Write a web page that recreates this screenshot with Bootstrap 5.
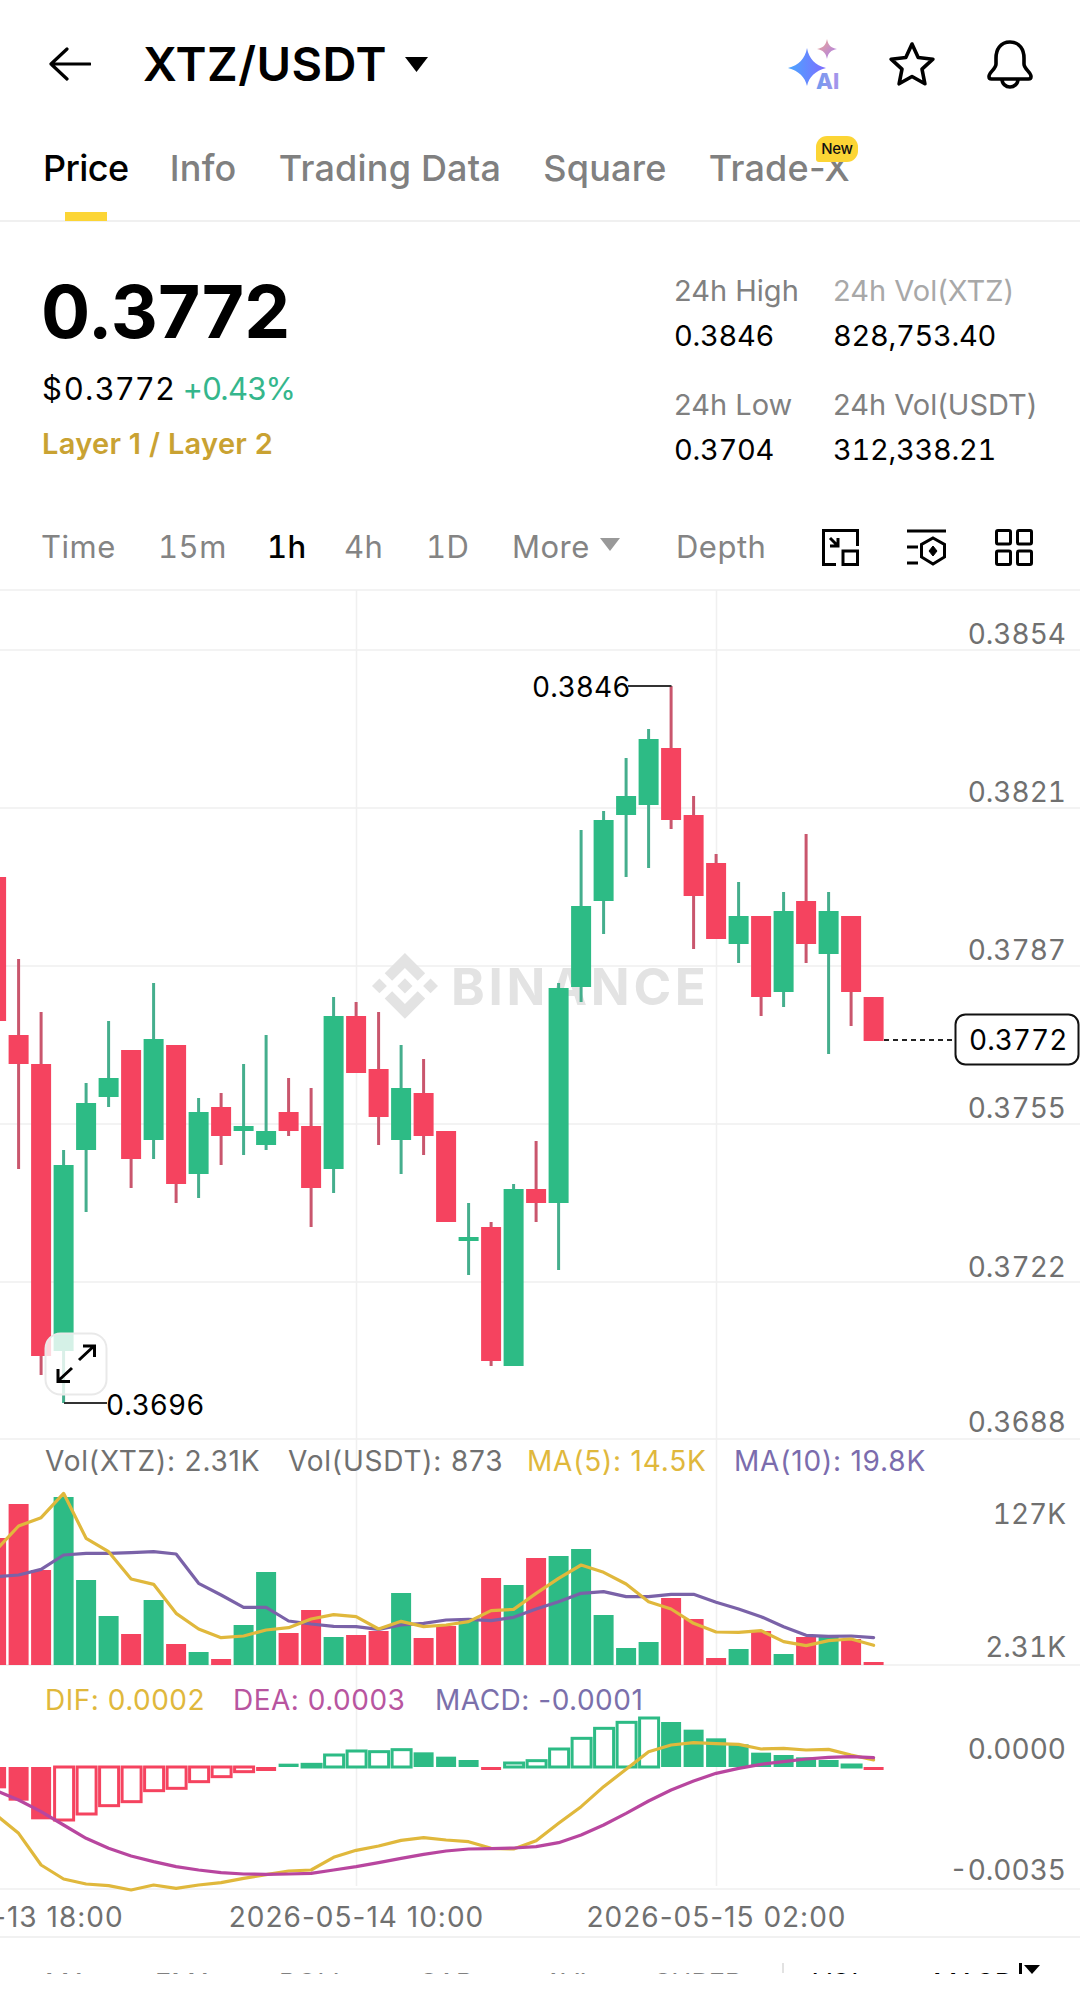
<!DOCTYPE html>
<html lang="en">
<head>
  <meta charset="UTF-8">
  <title>XTZ/USDT | Price</title>
  <link rel="stylesheet" href="https://cdn.jsdelivr.net/npm/bootstrap@5.3.0/dist/css/bootstrap.min.css">
  <style>
    body { font-family: Inter, "Liberation Sans", sans-serif; background: #fff; color: #000; width: 1080px; height: 1994px; overflow: hidden; }

    .top-bar { height: 128px; padding: 0 47px 0 49px; }
    .pair-name { font-size: 47px; font-weight: 600; line-height: 56px; margin-left: 52px; letter-spacing: .5px; }
    .pair-caret { width: 25px; height: 16px; margin-left: 17px; }
    .icon-ai { margin-right: 43px; }
    .icon-star { margin-right: 51px; }

    .tab-row { height: 94px; padding: 0 0 0 43px; gap: 42.3px; border-bottom: 2px solid #f0f0f0; }
    .tab-item { position: relative; font-size: 36px; line-height: 50px; color: #808080; margin-top: 15px; font-weight: 500; letter-spacing: .2px; }
    .tab-item.is-active { color: #000; letter-spacing: -.6px; margin-right: -1px; }
    .tab-item.is-active::after { content: ""; position: absolute; left: 22px; top: 69px; width: 42px; height: 9px; background: #fcd535; }
    .new-tag { position: absolute; right: -8px; top: -7px; width: 42px; height: 26px; border-radius: 11px 11px 11px 3px; background: #fcd535; color: #111; font-size: 15px; line-height: 26px; text-align: center; font-weight: 500; letter-spacing: -.4px; }

    .stats-row { height: 283px; padding: 50px 0 0 42px; }
    .last-price { font-size: 73px; font-weight: 700; line-height: 80px; margin-left: -1px; }
    .fiat-line { font-size: 31px; line-height: 40px; margin-top: 17px; letter-spacing: 2px; }
    .change-up { color: #35b68c; margin-left: 6px; letter-spacing: -.9px; }
    .tag-line { font-size: 29px; font-weight: 600; line-height: 40px; margin-top: 15px; color: #c9a232; letter-spacing: .3px; }
    .stat-col { width: 159px; margin-top: -1px; }
    .stat-col + .stat-col { width: 247px; }
    .stat-label { font-size: 29px; line-height: 40px; color: #808080; }
    .stat-label.is-light { color: #a8a8a8; }
    .stat-value { font-size: 29px; line-height: 40px; margin-top: 5px; margin-bottom: 29px; letter-spacing: -.3px; font-variant-numeric: tabular-nums; }

    .interval-row { height: 84px; padding: 0 47px 0 41px; font-size: 31px; color: #848484; letter-spacing: .5px; font-variant-numeric: tabular-nums; }
    .interval-row span { line-height: 40px; }
    .interval-row .is-active { color: #000; font-weight: 500; }
    .w-time { width: 117px; }
    .w-15m { width: 109px; }
    .w-1h { width: 77px; }
    .w-4h { width: 82px; }
    .w-1d { width: 86px; }
    .w-more { width: 88px; }
    .more-caret { width: 20px; height: 13px; margin-right: 56px; margin-top: -6px; }
    .gap-icon-2 { margin-left: 48px; }
    .gap-icon-3 { margin-left: 48px; }

    .chart-box { display: block; width: 1080px; height: 1347px; }
    .chart-box text { font-family: Inter, "Liberation Sans", sans-serif; font-size: 28px; letter-spacing: .8px; }
    .chart-box .tnum { font-variant-numeric: tabular-nums; letter-spacing: 0; }
    .chart-box .date-axis text { letter-spacing: 1px; }
    .chart-box .macd-legend text { letter-spacing: .5px; }
    .chart-box .mark-text { font-size: 51px; font-weight: 700; letter-spacing: 3.7px; }

    .indicator-row { height: 38px; overflow: hidden; padding: 26px 0 0 45px; border-top: 2px solid #f1f1f1; font-size: 27px; line-height: 40px; color: #808080; grid-template-columns: 110px 124px 141px 124px 110px 128px 31px 120px 86px auto; }
    .indicator-row .is-on { color: #000; }
    .indicator-split { width: 2px; height: 10px; background: #e2e2e2; margin-top: -1px; }
    .indicator-more { width: 16px; height: 9px; margin: 1px 0 0 2px; }
    .indicator-bar { width: 3px; height: 11px; background: #000; margin-top: -1px; }
  </style>
</head>
<body>

  <div class="d-flex align-items-center top-bar">
    <svg width="42" height="34" viewBox="0 0 42 34" fill="none" stroke="#000" stroke-width="3.2" stroke-linecap="round" stroke-linejoin="round"><path d="M41 17H2M18 2 2 17l16 15"/></svg>
    <span class="pair-name">XTZ/USDT</span>
    <svg class="pair-caret" viewBox="0 0 25 16"><path d="M1 1h23L12.500 16z" fill="#000"/></svg>
    <div class="ms-auto d-flex align-items-center">
      <svg class="icon-ai" width="60" height="56" viewBox="785 35 60 56">
        <defs>
          <linearGradient id="aiBig" x1="0" y1="0" x2="1" y2="0"><stop offset="0" stop-color="#4aa6ff"/><stop offset="1" stop-color="#7f6cff"/></linearGradient>
          <linearGradient id="aiSmall" x1="0" y1="0" x2="1" y2="1"><stop offset="0" stop-color="#f2a98f"/><stop offset="1" stop-color="#a57cf0"/></linearGradient>
          <linearGradient id="aiText" x1="0" y1="0" x2="1" y2="0"><stop offset="0" stop-color="#6f9bf0"/><stop offset="1" stop-color="#a994ea"/></linearGradient>
        </defs>
        <path d="M807 47C809 58 815 64 826 67C815 70 809 76 807 85C805 76 799 70 788 67C799 64 805 58 807 47Z" fill="url(#aiBig)"/>
        <path d="M827 38C828 44 831 47 837 48C831 49 828 52 827 58C826 52 823 49 817 48C823 47 826 44 827 38Z" fill="url(#aiSmall)"/>
        <text x="816" y="88" font-size="22" font-weight="800" fill="url(#aiText)" font-family="Inter, sans-serif">AI</text>
      </svg>
      <svg class="icon-star" width="48" height="46" viewBox="0 0 48 46" fill="none" stroke="#000" stroke-width="3.6" stroke-linejoin="round"><path d="M24 3 30.200 16.500 44.900 18.200 34 28.200 36.900 42.800 24 35.500 11.100 42.800 14 28.200 3.100 18.200 17.800 16.500Z"/></svg>
      <svg width="46" height="49" viewBox="0 0 46 49" fill="none" stroke="#000" stroke-width="3.6" stroke-linejoin="round"><path d="M23 2C13 2 9 10 9 18V24C9 29 2 32 2 36.500 2 38 3 39 4.500 39H41.500C43 39 44 38 44 36.500 44 32 37 29 37 24V18C37 10 33 2 23 2Z"/><path d="M15 39C15 44 19 47 23 47 27 47 31 44 31 39"/></svg>
    </div>
  </div>

  <div class="d-flex align-items-start tab-row">
    <span class="tab-item is-active">Price</span>
    <span class="tab-item">Info</span>
    <span class="tab-item">Trading Data</span>
    <span class="tab-item">Square</span>
    <span class="tab-item">Trade-X<span class="new-tag">New</span></span>
  </div>

  <div class="d-flex stats-row">
    <div class="flex-grow-1">
      <div class="last-price">0.3772</div>
      <div class="fiat-line">$0.3772<span class="change-up">+0.43%</span></div>
      <div class="tag-line">Layer 1 / Layer 2</div>
    </div>
    <div class="stat-col">
      <div class="stat-label">24h High</div>
      <div class="stat-value">0.3846</div>
      <div class="stat-label">24h Low</div>
      <div class="stat-value">0.3704</div>
    </div>
    <div class="stat-col">
      <div class="stat-label is-light">24h Vol(XTZ)</div>
      <div class="stat-value">828,753.40</div>
      <div class="stat-label">24h Vol(USDT)</div>
      <div class="stat-value">312,338.21</div>
    </div>
  </div>

  <div class="d-flex align-items-center interval-row">
    <span class="w-time">Time</span>
    <span class="w-15m">15m</span>
    <span class="w-1h is-active">1h</span>
    <span class="w-4h">4h</span>
    <span class="w-1d">1D</span>
    <span class="w-more">More</span>
    <svg class="more-caret" viewBox="0 0 20 13"><path d="M0 0h20L10 13z" fill="#999"/></svg>
    <span>Depth</span>
    <svg class="ms-auto" width="37" height="37" viewBox="0 0 37 37" fill="none" stroke="#000" stroke-width="3"><path d="M14 35.500H1.500V1.500H35.500V17"/><rect x="21" y="22" width="14.500" height="13.500"/><path d="M8 9 16 17M16 9V17H8"/></svg>
    <svg class="gap-icon-2" width="40" height="38" viewBox="0 0 40 38" fill="none" stroke="#000" stroke-width="3"><path d="M0 3H39M0 19H11M0 35H11"/><path d="M26 10 37.500 16.500V29L26 36 14.500 29V16.500Z"/><path d="M26 18 30 23 26 28 22 23Z" fill="#000" stroke-width="1"/></svg>
    <svg class="gap-icon-3" width="38" height="37" viewBox="0 0 38 37" fill="none" stroke="#000" stroke-width="3"><rect x="1.500" y="1.500" width="14" height="13.500" rx="1.500"/><rect x="22.500" y="1.500" width="14" height="13.500" rx="1.500"/><rect x="1.500" y="22" width="14" height="13.500" rx="1.500"/><rect x="22.500" y="22" width="14" height="13.500" rx="1.500"/></svg>
  </div>

  <svg id="chart" class="chart-box" viewBox="0 589 1080 1347"></svg>

  <div class="d-grid indicator-row">
    <span>MA</span>
    <span>EMA</span>
    <span>BOLL</span>
    <span>SAR</span>
    <span>AVL</span>
    <span>SUPER</span>
    <div class="indicator-split"></div>
    <span class="is-on">VOL</span>
    <span class="is-on">MACD</span>
    <div class="d-flex align-items-start">
      <div class="indicator-bar"></div>
      <svg class="indicator-more" viewBox="0 0 16 9"><path d="M0 0h16L8 9z" fill="#000"/></svg>
    </div>
  </div>

  <script>
    const RED = "#f5435f", GREEN = "#2dbb85", RED_WICK = "#c9566d", GREEN_WICK = "#45ae8d";
    const YELLOW = "#e0b83c", PURPLE = "#7a62a8", PINK = "#b8469f";
    const xAt = i => 18.6 + 22.5 * i;

    // [up, wickTop, bodyTop, bodyBottom, wickBottom], first candle is i = -1
    const candles = [
      [0,877,877,1021,1021],[0,959,1035,1064,1169],[0,1012,1064,1356,1375],[1,1150,1165,1351,1403],
      [1,1083,1103,1150,1212],[1,1021,1078,1097,1107],[0,1050,1050,1159,1188],[1,983,1039,1140,1159],
      [0,1045,1045,1184,1203],[1,1098,1112,1174,1198],[0,1093,1107,1136,1165],[1,1064,1126,1131,1155],
      [1,1035,1131,1145,1150],[0,1078,1112,1131,1136],[0,1088,1126,1188,1227],[1,997,1016,1169,1193],
      [0,1002,1016,1073,1073],[0,1012,1069,1117,1145],[1,1045,1088,1140,1174],[0,1059,1093,1136,1155],
      [0,1131,1131,1222,1222],[1,1203,1237,1241,1275],[0,1222,1227,1361,1366],[1,1184,1189,1366,1366],
      [0,1141,1189,1203,1222],[1,983,988,1203,1270],[1,830,906,987,1002],[1,811,820,901,934],
      [1,758,796,815,877],[1,729,739,805,868],[0,686,748,820,829],[0,796,815,896,949],
      [0,854,863,939,939],[1,882,916,944,963],[0,916,916,997,1016],[1,892,911,992,1007],
      [0,834,901,944,963],[1,892,911,954,1054],[0,916,916,992,1026],[0,997,997,1041,1041]
    ];
    const volTops = [1538,1504,1570,1497,1580,1616,1634,1600,1644,1652,1659,1625,1572,1633,1610,1637,1635,1631,1593,1638,1626,1621,1578,1585,1558,1556,1549,1615,1648,1642,1598,1619,1658,1649,1631,1654,1637,1635,1639,1662];

    // values below are read from the 3x crops, base is the crop's top edge
    const ma5 = [360,288,263,190,325,365,447,463,550,597,623,618,600,593,567,554,560,597,574,590,585,575,542,538,490,445,405,427,462,515,537,580,606,607,602,635,647,632,627,646];
    const ma10 = [440,435,418,375,370,370,368,365,372,460,495,532,532,573,582,589,590,598,585,580,570,568,572,562,537,515,490,485,500,500,493,493,517,537,560,590,616,619,618,623];
    const dif = [435,490,585,627,642,647,660,645,655,645,638,625,614,603,600,562,541,528,511,503,510,515,535,537,512,460,410,350,298,245,225,218,221,223,237,235,240,238,255,270];
    const dea = [362,390,425,465,505,535,558,575,590,600,608,612,613,612,610,600,590,578,565,553,543,537,536,534,530,518,495,465,430,393,360,333,310,295,283,275,267,262,260,263];
    // [edge, hollow]
    const macd = [[355,0],[392,0],[448,0],[450,1],[432,1],[407,1],[395,1],[362,1],[355,1],[335,1],[320,1],[305,1],[303,0],[281,0],[283,1],[255,1],[243,1],[245,1],[239,1],[247,0],[260,0],[270,0],[296,0],[279,1],[272,1],[237,1],[205,1],[175,1],[157,1],[144,1],[156,0],[179,0],[205,0],[223,0],[248,0],[255,0],[262,0],[270,0],[285,1],[296,0]];

    const rect = (x, y, w, h, fill) => `<rect x="${x}" y="${y}" width="${w}" height="${h}" fill="${fill}"/>`;
    const line = (x1, y1, x2, y2, color, w) => `<line x1="${x1}" y1="${y1}" x2="${x2}" y2="${y2}" stroke="${color}" stroke-width="${w}"/>`;
    const label = (x, y, str, color, anchor) => `<text x="${x}" y="${y + 10}" fill="${color}" text-anchor="${anchor || "start"}">${str}</text>`;
    const price = (x, y, str, color, anchor) => `<text class="tnum" x="${x}" y="${y + 10}" fill="${color}" text-anchor="${anchor || "start"}">${str}</text>`;
    const curve = (vals, base, color) => {
      const pts = vals.map((v, n) => xAt(n - 1) + "," + (base + v / 3)).join(" ");
      return `<polyline points="${pts}" fill="none" stroke="${color}" stroke-width="3.200" stroke-linejoin="round" stroke-linecap="round"/>`;
    };

    let s = "";

    // grid
    [590, 650, 808, 966, 1124, 1282, 1439, 1665, 1889].forEach(y => { s += line(0, y, 1080, y, "#f3f3f3", 2); });
    [356.5, 716.5].forEach(x => { s += line(x, 590, x, 1886, "#f0f0f0", 1.5); });

    // watermark
    s += `<g transform="translate(372 953) scale(.52)" fill="#e3e3e3"><path d="M38.730 53.200l24.590-24.580 24.600 24.600 14.300-14.310L63.320 0 24.420 38.900zM0 63.310l14.300-14.310 14.310 14.310-14.310 14.300zM38.730 73.410l24.590 24.590 24.600-24.600 14.310 14.290-38.900 38.910-38.910-38.880v-.03zM98.280 63.310l14.300-14.310 14.310 14.300-14.310 14.300zM77.830 63.300L63.320 48.780 52.590 59.510l-1.240 1.230-2.540 2.540 14.510 14.500 14.510-14.470z"/></g>`;
    s += `<text class="mark-text" x="451" y="1005" fill="#e3e3e3">BINANCE</text>`;

    // candles
    candles.forEach((c, n) => {
      const x = xAt(n - 1);
      s += line(x, c[1], x, c[4], c[0] ? GREEN_WICK : RED_WICK, 3);
      s += rect(x - 10, c[2], 20, c[3] - c[2], c[0] ? GREEN : RED);
    });

    // high / low / last price
    s += price(532, 687, "0.3846", "#000");
    s += line(628, 686, 671.5, 686, "#333", 2);
    s += price(106, 1405, "0.3696", "#000");
    s += line(64, 1403, 107, 1403, "#333", 2);
    s += `<line x1="884" y1="1040" x2="955" y2="1040" stroke="#222" stroke-width="2" stroke-dasharray="5 4"/>`;
    s += `<rect x="955.500" y="1014.500" width="123" height="50" rx="10" fill="#fff" stroke="#111" stroke-width="2"/>`;
    s += price(969, 1040, "0.3772", "#000");

    // price axis
    [[634,"0.3854"],[792,"0.3821"],[950,"0.3787"],[1108,"0.3755"],[1267,"0.3722"],[1422,"0.3688"]].forEach(a => {
      s += price(1066, a[0], a[1], "#707070", "end");
    });

    // expand button
    s += `<rect x="45.500" y="1333.500" width="61" height="61" rx="15" fill="#fff" fill-opacity=".8" stroke="#e9e9e9" stroke-width="2"/>`;
    s += `<path d="M79 1360 94 1346M83 1346H94.500V1357M72 1368 58 1381M58 1369V1381.500H70" fill="none" stroke="#000" stroke-width="3"/>`;

    // volume
    s += label(45, 1461, "Vol(XTZ): 2.31K", "#707070");
    s += label(288, 1461, "Vol(USDT): 873", "#707070");
    s += label(527, 1461, "MA(5): 14.5K", YELLOW);
    s += label(734, 1461, "MA(10): 19.8K", "#7b6cad");
    s += price(1066, 1514, "127K", "#707070", "end");
    s += price(1066, 1647, "2.31K", "#707070", "end");
    volTops.forEach((top, n) => { s += rect(xAt(n - 1) - 10, top, 20, 1665 - top, candles[n][0] ? GREEN : RED); });
    s += curve(ma10, 1430, PURPLE);
    s += curve(ma5, 1430, YELLOW);

    // macd
    s += `<g class="macd-legend">`;
    s += label(45, 1700, "DIF: 0.0002", YELLOW);
    s += label(233, 1700, "DEA: 0.0003", "#b8559f");
    s += label(435, 1700, "MACD: -0.0001", "#7b70ab");
    s += `</g>`;
    s += price(1066, 1749, "0.0000", "#707070", "end");
    s += price(1066, 1870, "-0.0035", "#707070", "end");
    const zero = 1670 + 291 / 3;
    macd.forEach((m, n) => {
      const x = xAt(n - 1) - 10, edge = 1670 + m[0] / 3, up = edge < zero;
      const top = Math.min(edge, zero), h = Math.abs(edge - zero), color = up ? GREEN : RED;
      if (m[1]) s += `<rect x="${x + 1}" y="${top}" width="19" height="${h}" fill="#fff" stroke="${color}" stroke-width="3"/>`;
      else s += rect(x, top, 20, Math.max(h, 3), color);
    });
    s += curve(dif, 1670, YELLOW);
    s += curve(dea, 1670, PINK);

    // time axis
    s += `<g class="date-axis">`;
    [[356.5,"2026-05-14 10:00"],[716.5,"2026-05-15 02:00"],[-3.5,"2026-05-13 18:00"]].forEach(a => {
      s += label(a[0], 1917, a[1], "#707070", "middle");
    });
    s += `</g>`;

    document.getElementById("chart").innerHTML = s;
  </script>
  <script src="https://cdn.jsdelivr.net/npm/bootstrap@5.3.0/dist/js/bootstrap.bundle.min.js"></script>
</body>
</html>
